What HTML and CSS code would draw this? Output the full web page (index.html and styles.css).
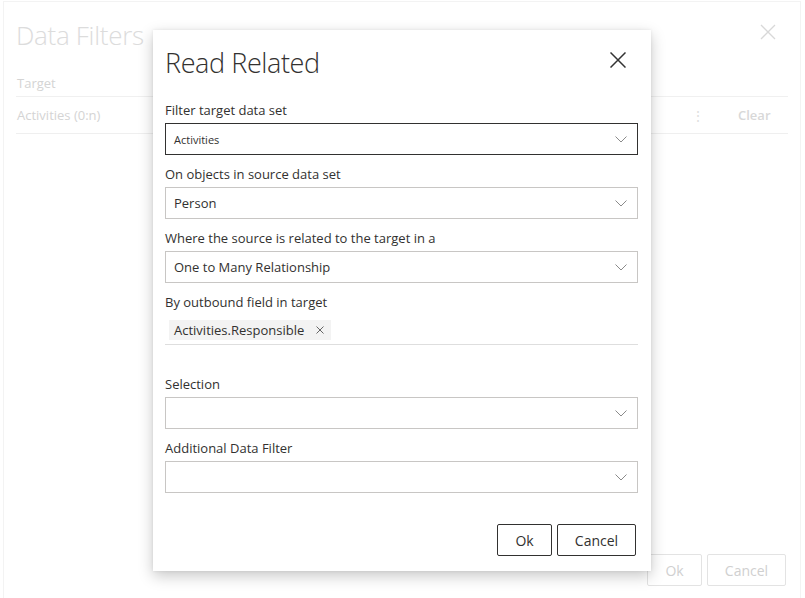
FILE: index.html
```html
<!DOCTYPE html>
<html>
<head>
<meta charset="utf-8">
<link rel="stylesheet" href="styles.css">
</head>
<body>
<div class="panel">
  <div class="panel-head">
    <div class="panel-title">Data Filters</div>
    <svg class="panel-close" width="16" height="16" viewBox="0 0 16 16"><path d="M1 1L15 15M15 1L1 15" stroke="#d8d8d8" stroke-width="1.3" fill="none"/></svg>
  </div>
  <div class="grid-head">Target</div>
  <div class="grid-row">
    <span class="grid-cell">Activities (0:n)</span>
    <span class="grid-more">⋮</span>
    <span class="grid-clear">Clear</span>
  </div>
  <div class="panel-spacer"></div>
  <div class="panel-foot">
    <button class="ghost-btn ok">Ok</button>
    <button class="ghost-btn cancel">Cancel</button>
  </div>
</div>

<div class="modal">
  <div class="modal-head">
    <div class="modal-title">Read Related</div>
    <svg class="modal-close" width="16" height="16" viewBox="0 0 16 16"><path d="M0.5 0.5L15.5 15.5M15.5 0.5L0.5 15.5" stroke="#333" stroke-width="1.5" fill="none"/></svg>
  </div>

  <div class="field">
    <div class="label">Filter target data set</div>
    <div class="select focused"><span class="small">Activities</span><svg class="chev" width="12" height="7" viewBox="0 0 12 7"><path d="M0.5 0.5L6 6L11.5 0.5" stroke="#8a8a8a" fill="none"/></svg></div>
  </div>
  <div class="field">
    <div class="label">On objects in source data set</div>
    <div class="select"><span>Person</span><svg class="chev" width="12" height="7" viewBox="0 0 12 7"><path d="M0.5 0.5L6 6L11.5 0.5" stroke="#8a8a8a" fill="none"/></svg></div>
  </div>
  <div class="field">
    <div class="label">Where the source is related to the target in a</div>
    <div class="select"><span>One to Many Relationship</span><svg class="chev" width="12" height="7" viewBox="0 0 12 7"><path d="M0.5 0.5L6 6L11.5 0.5" stroke="#8a8a8a" fill="none"/></svg></div>
  </div>
  <div class="field tags-field">
    <div class="label">By outbound field in target</div>
    <div class="tags">
      <span class="tag">Activities.Responsible<svg class="tag-x" width="8" height="8" viewBox="0 0 8 8"><path d="M0.5 0.5L7.5 7.5M7.5 0.5L0.5 7.5" stroke="#666" fill="none"/></svg></span>
    </div>
  </div>
  <div class="field">
    <div class="label">Selection</div>
    <div class="select"><span></span><svg class="chev" width="12" height="7" viewBox="0 0 12 7"><path d="M0.5 0.5L6 6L11.5 0.5" stroke="#8a8a8a" fill="none"/></svg></div>
  </div>
  <div class="field">
    <div class="label">Additional Data Filter</div>
    <div class="select"><span></span><svg class="chev" width="12" height="7" viewBox="0 0 12 7"><path d="M0.5 0.5L6 6L11.5 0.5" stroke="#8a8a8a" fill="none"/></svg></div>
  </div>

  <div class="modal-foot">
    <button class="btn ok">Ok</button>
    <button class="btn cancel">Cancel</button>
  </div>
</div>
</body>
</html>
```

FILE: styles.css
```css
* { box-sizing: border-box; }
html, body { margin: 0; padding: 0; }
body {
  width: 805px;
  height: 598px;
  background: #fff;
  font-family: "Open Sans", "Noto Sans", sans-serif;
  color: #323130;
  overflow: hidden;
  position: relative;
}
.panel {
  margin: 1px 4px 0 3px;
  height: 597px;
  border: 1px solid #f3f3f3;
  border-bottom: none;
  display: flex;
  flex-direction: column;
  padding: 0 12px 0 12px;
}
.panel-head {
  display: flex;
  justify-content: space-between;
  align-items: flex-start;
  height: 68px;
  padding-top: 15px;
}
.panel-title {
  font-size: 26px;
  font-weight: 300;
  color: #dcdcdc;
  line-height: 36px;
  letter-spacing: -0.3px;
}
.panel-close { margin-top: 7px; margin-right: 12px; }
.grid-head {
  font-size: 13px;
  color: #d4d4d4;
  line-height: 26px;
  padding-left: 1px;
  border-bottom: 1px solid #f0f0f0;
}
.grid-row {
  display: flex;
  align-items: center;
  height: 37px;
  font-size: 13px;
  color: #d4d4d4;
  border-bottom: 1px solid #efefef;
  padding-left: 1px;
}
.grid-cell { flex: 1; }
.grid-more { width: 20px; color: #e0e0e0; font-size: 14px; margin-right: 28px; text-align: center; }
.grid-clear { width: 52px; font-weight: 600; color: #d8d8d8; padding-left: 2px; }
.panel-spacer { flex: 1; }
.panel-foot {
  display: flex;
  justify-content: flex-end;
  gap: 5px;
  padding-bottom: 12px;
  padding-right: 2px;
}
.ghost-btn {
  height: 32px;
  background: #fff;
  border: 1px solid #e3e3e3;
  border-radius: 2px;
  font-family: inherit;
  font-size: 14px;
  color: #d0d0d0;
}
.ghost-btn.ok { width: 55px; }
.ghost-btn.cancel { width: 79px; }

.modal {
  position: absolute;
  left: 153px;
  top: 30px;
  width: 498px;
  height: 541px;
  background: #fff;
  box-shadow: 0 5px 14px rgba(0,0,0,0.22), 0 0 3px rgba(0,0,0,0.08);
  padding: 0 13px 0 12px;
  display: flex;
  flex-direction: column;
}
.modal-head {
  display: flex;
  justify-content: space-between;
  align-items: flex-start;
  height: 70px;
  padding-top: 14px;
}
.modal-title {
  font-size: 27px;
  font-weight: 300;
  line-height: 38px;
  color: #323130;
  letter-spacing: -0.4px;
}
.modal-close { margin-top: 8px; margin-right: 12px; }
.field { margin-bottom: 9px; }
.label {
  font-size: 13px;
  line-height: 20px;
  margin-bottom: 3px;
  color: #323130;
}
.select {
  height: 32px;
  border: 1px solid #c8c6c4;
  display: flex;
  align-items: center;
  justify-content: space-between;
  padding: 0 8px 0 8px;
  font-size: 13px;
  color: #323130;
}
.select.focused { border-color: #323130; }
.select .small { font-size: 11px; }
.chev { margin-right: 2px; }
.tags-field { margin-bottom: 29px; }
.tags {
  border-bottom: 1px solid #dedede;
  padding: 3px 0 5px 4px;
  height: 30px;
}
.tag {
  display: inline-flex;
  align-items: center;
  height: 20px;
  background: #f3f3f3;
  padding: 0 7px 0 5px;
  font-size: 13px;
  color: #323130;
}
.tag-x { margin-left: 12px; }
.modal-foot {
  margin-top: auto;
  display: flex;
  justify-content: flex-end;
  gap: 5px;
  padding-bottom: 15px;
  padding-right: 2px;
}
.btn {
  height: 32px;
  background: #fff;
  border: 1px solid #323130;
  border-radius: 2px;
  font-family: inherit;
  font-size: 14px;
  font-weight: 500;
  color: #323130;
}
.btn.ok { width: 55px; }
.btn.cancel { width: 79px; }
```
